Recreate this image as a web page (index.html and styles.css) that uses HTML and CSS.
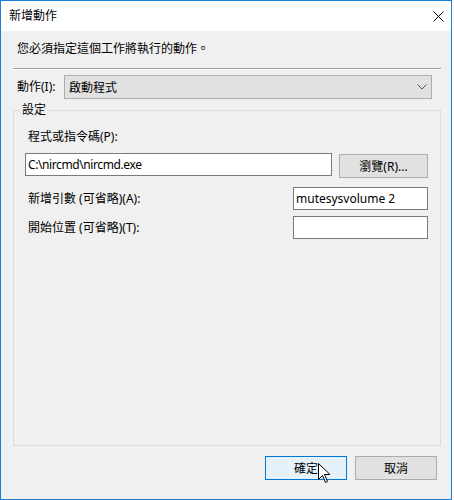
FILE: index.html
```html
<!DOCTYPE html>
<html lang="zh-Hant">

<head>
    <meta charset="utf-8" />
    <meta name="viewport" content="width=device-width, initial-scale=1.0" />
    <title>新增動作</title>
    <link rel="stylesheet" href="styles.css">
</head>

<body>
    <div class="window">
        <div class="titlebar">
            <span class="title">新增動作</span>
            <svg class="close-icon" width="11" height="11" viewBox="0 0 11 11">
                <path d="M0.5 0.5 L10.5 10.5 M10.5 0.5 L0.5 10.5" stroke="#000" stroke-width="1" fill="none" />
            </svg>
        </div>

        <div class="content">
            <p class="intro">您必須指定這個工作將執行的動作。</p>
            <div class="rule"></div>

            <div class="action-row">
                <label class="action-label">動作(I):</label>
                <div class="combo">
                    <span>啟動程式</span>
                    <svg class="chevron" width="10" height="6" viewBox="0 0 10 6">
                        <polyline points="0.5,0.5 5,5 9.5,0.5" stroke="#555" stroke-width="1" fill="none" />
                    </svg>
                </div>
            </div>

            <fieldset class="settings">
                <legend>設定</legend>
                <div class="field-label">程式或指令碼(P):</div>
                <div class="program-row">
                    <input class="textbox program-input" type="text" value="C:\nircmd\nircmd.exe">
                    <button class="btn browse-btn">瀏覽(R)...</button>
                </div>
                <div class="option-row first-option">
                    <label class="option-label">新增引數 (可省略)(A):</label>
                    <input class="textbox option-input" type="text" value="mutesysvolume 2">
                </div>
                <div class="option-row">
                    <label class="option-label">開始位置 (可省略)(T):</label>
                    <input class="textbox option-input" type="text" value="">
                </div>
            </fieldset>

            <div class="footer">
                <button class="btn btn-default">確定</button>
                <button class="btn">取消</button>
                <!-- mouse pointer sitting over the OK button -->
                <svg class="pointer" width="13" height="20" viewBox="0 0 13 20">
                    <path d="M0.5 0.5 L0.5 16.5 L4.5 12.5 L7.5 19.5 L9.5 18.5 L6.5 11.5 L12 11.5 Z" fill="#fff" stroke="#000" stroke-width="1" stroke-linejoin="miter" />
                </svg>
            </div>
        </div>
    </div>
</body>

</html>
```

FILE: styles.css
```css
html {
    font-family: "Noto Sans", "Noto Sans CJK TC", sans-serif;
    font-size: 12px;
    color: #000;
}

body {
    margin: 0;
    background: #fff;
}

.window {
    width: 452px;
    height: 500px;
    box-sizing: border-box;
    border: 1px solid #1a7fd6;
    display: flex;
    flex-direction: column;
}

.titlebar {
    height: 30px;
    background: #fff;
    display: flex;
    align-items: center;
    justify-content: space-between;
    padding: 0 7px 0 8px;
    line-height: 16px;
}

.content {
    flex: 1;
    background: #f0f0f0;
    display: flex;
    flex-direction: column;
    padding: 10px 10px 19px 12px;
}

.intro {
    margin: 0 0 0 4px;
    line-height: 16px;
}

.rule {
    margin-top: 11px;
    border-top: 1px solid #a0a0a0;
    border-bottom: 1px solid #fff;
}

.action-row {
    display: flex;
    align-items: center;
    margin-top: 5px;
    padding-right: 9px;
}

.action-label {
    width: 47px;
    padding-left: 4px;
    line-height: 16px;
}

.combo {
    flex: 1;
    height: 24px;
    box-sizing: border-box;
    background: #e1e1e1;
    border: 1px solid #adadad;
    display: flex;
    align-items: center;
    justify-content: space-between;
    padding: 0 4px 0 4px;
}

.settings {
    flex: 1;
    margin: 3px 0 0 0;
    padding: 11px 12px 0 11px;
    border: 1px solid #dcdcdc;
    min-width: 0;
}

.settings legend {
    margin-left: -5px;
    padding: 0 2px;
    line-height: 16px;
}

.field-label {
    margin-left: 3px;
    line-height: 16px;
}

.program-row {
    display: flex;
    align-items: flex-start;
    margin-top: 8px;
}

.textbox {
    font-family: inherit;
    font-size: 12px;
    color: #000;
    height: 23px;
    box-sizing: border-box;
    border: 1px solid #7a7a7a;
    background: #fff;
    padding: 0 2px;
    margin: 0;
    outline: none;
}

.program-input {
    width: 307px;
    letter-spacing: -0.4px;
}

.btn {
    font-family: inherit;
    font-size: 12px;
    color: #000;
    background: #e1e1e1;
    border: 1px solid #adadad;
    padding: 0;
    margin: 0;
    width: 82px;
    height: 24px;
    box-sizing: border-box;
}

.browse-btn {
    width: 89px;
    margin-left: 7px;
    margin-top: 1px;
}

.option-row {
    display: flex;
    align-items: center;
    justify-content: space-between;
    margin-top: 6px;
}

.first-option {
    margin-top: 9px;
}

.option-label {
    margin-left: 3px;
    line-height: 16px;
}

.option-input {
    width: 135px;
}

.footer {
    display: flex;
    justify-content: flex-end;
    gap: 8px;
    margin-top: 10px;
    padding-right: 4px;
    position: relative;
}

.btn-default {
    background: #e5f1fb;
    border-color: #0078d7;
}

.pointer {
    position: absolute;
    left: 305px;
    top: 7px;
}
```
